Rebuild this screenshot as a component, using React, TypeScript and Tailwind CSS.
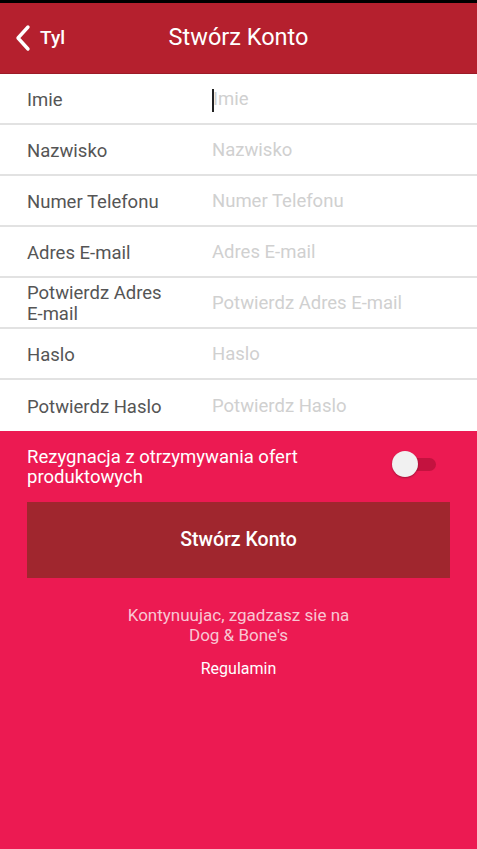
import React from "react";

const fields: { label: string; placeholder: string }[] = [
  { label: "Imie", placeholder: "Imie" },
  { label: "Nazwisko", placeholder: "Nazwisko" },
  { label: "Numer Telefonu", placeholder: "Numer Telefonu" },
  { label: "Adres E-mail", placeholder: "Adres E-mail" },
  { label: "Potwierdz Adres E-mail", placeholder: "Potwierdz Adres E-mail" },
  { label: "Haslo", placeholder: "Haslo" },
  { label: "Potwierdz Haslo", placeholder: "Potwierdz Haslo" },
];

export default function App() {
  return (
    <div className="w-[477px] h-[849px] flex flex-col bg-[#ec1a52] font-['Roboto',sans-serif] overflow-hidden">
      <div className="h-[3px] bg-black" />
      {/* header */}
      <div className="relative h-[71px] bg-[#b5202e] flex items-center justify-center border-b border-[#9c1b27]">
        <div className="absolute left-[14px] top-0 h-full flex items-center gap-[8px] text-white">
          <svg width="18" height="28" viewBox="0 0 18 28" fill="none">
            <path d="M14 3 L4 14 L14 25" stroke="white" strokeWidth="3.4" strokeLinecap="round" strokeLinejoin="round" />
          </svg>
          <span className="text-[19px] font-medium">Tyl</span>
        </div>
        <h1 className="text-white text-[23.5px] font-normal">Stwórz Konto</h1>
      </div>
      {/* form rows */}
      <div className="bg-white">
        {fields.map((f, i) => (
          <div
            key={f.label}
            className="h-[51px] pt-[3px] flex items-center border-b-2 border-[#e2e2e2] last:border-b-0"
          >
            <div className="w-[212px] shrink-0 pl-[27px]">
              <div className="w-[150px] text-[18.5px] leading-[21px] text-[#555]">{f.label}</div>
            </div>
            <div className="flex items-center text-[18.5px] text-[#d0d0d0]">
              {i === 0 && <span className="w-[2px] h-[23px] bg-[#222] mr-[-1px]" />}
              {f.placeholder}
            </div>
          </div>
        ))}
      </div>
      {/* pink section */}
      <div className="flex-1 px-[27px] pt-[16px]">
        <div className="flex items-start justify-between">
          <p className="text-white text-[18.5px] leading-[20px] w-[310px]">
            Rezygnacja z otrzymywania ofert produktowych
          </p>
          <div className="relative w-[44px] h-[26px] mt-[4px] mr-[14px]">
            <div className="absolute left-[6px] right-0 top-[7px] h-[13px] rounded-full bg-[#c4123f]" />
            <div className="absolute left-0 top-0 w-[26px] h-[26px] rounded-full bg-[#f1f1f1] shadow-[0_1px_2px_rgba(0,0,0,0.3)]" />
          </div>
        </div>
        <button className="mt-[15px] w-full h-[76px] bg-[#a0262e] text-white text-[19.5px] font-medium">
          Stwórz Konto
        </button>
        <p className="mt-[27px] text-center text-[17px] leading-[20px] text-[#f9c6d3]">
          Kontynuujac, zgadzasz sie na
          <br />
          Dog &amp; Bone's
        </p>
        <p className="mt-[12px] text-center text-[16px] text-white">Regulamin</p>
      </div>
    </div>
  );
}
